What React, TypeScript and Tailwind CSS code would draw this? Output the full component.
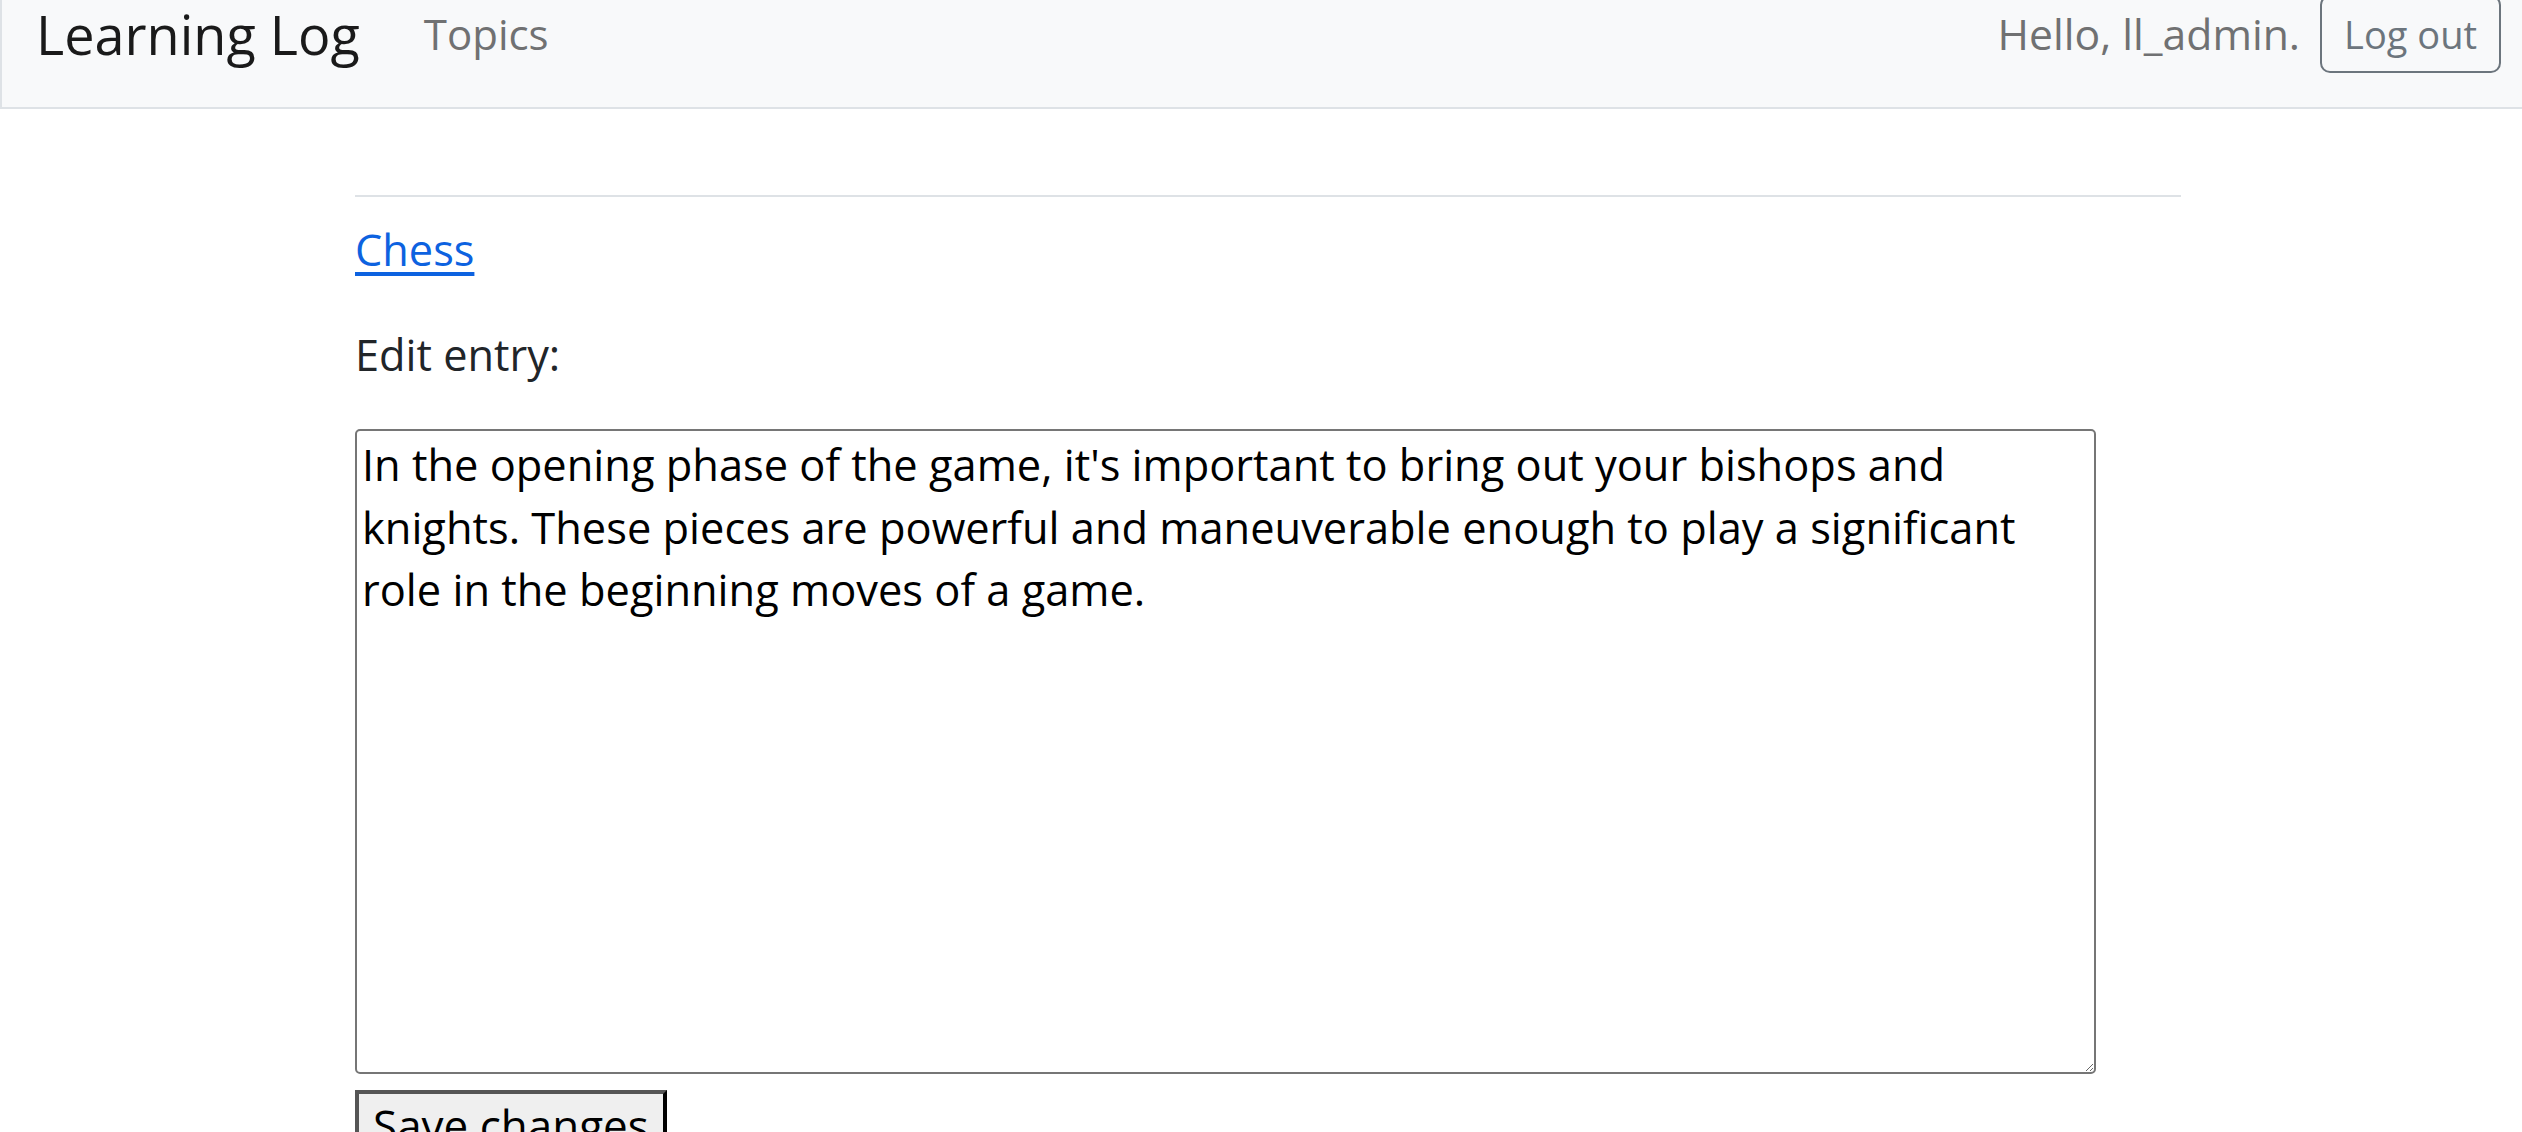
import React from 'react';

const entryText =
  "In the opening phase of the game, it's important to bring out your bishops and\nknights. These pieces are powerful and maneuverable enough to play a significant\nrole in the beginning moves of a game.";

export default function App() {
  return (
    <div className="min-h-screen bg-white font-['Open_Sans','Noto_Sans',sans-serif] text-[#212529] overflow-hidden">
      {/* Navbar (page is scrolled a little, so the top is cut) */}
      <nav className="-mt-[39px] h-[148px] bg-[#f8f9fa] border-b-2 border-l-2 border-[#dee2e6] flex items-center pl-[34px] pr-[21px]">
        <a href="#" className="text-[54px] leading-[1.2] text-[#1a1a1a]">Learning Log</a>
        <a href="#" className="ml-[64px] text-[42px] leading-[1.3] text-[#707172]">Topics</a>
        <div className="ml-auto flex items-center">
          <span className="text-[42.7px] leading-[1.3] text-[#707172]">Hello, ll_admin.</span>
          <button className="ml-[20px] h-[78px] px-[22px] border-2 border-[#6c757d] rounded-[10px] text-[38px] leading-none text-[#6c757d]">
            Log out
          </button>
        </div>
      </nav>

      <main className="ml-[355px] w-[1826px]">
        {/* page header */}
        <div className="mt-[65px] pb-[21px] border-b-2 border-[#dee2e6]" />

        <div className="mt-[21px] text-[43.3px] leading-[63px]">
          <p className="mb-[42px]">
            <a href="#" className="text-[#0d62e0] underline underline-offset-[6px]">Chess</a>
          </p>
          <p className="mb-[43px]">Edit entry:</p>

          <form className="flex flex-col items-start">
            <textarea
              defaultValue={entryText}
              className="w-[1741px] h-[645px] border-2 border-[#767676] rounded-[5px] px-[5px] pt-[3px] text-[43.4px] leading-[62.5px] text-black outline-none"
            />
            <button
              type="button"
              className="mt-[16px] bg-[#efefef] border-4 border-t-[#555] border-l-[#555] border-r-black border-b-black px-[14px] pt-[2px] pb-[6px] text-[44px] leading-[58px] text-black"
            >
              Save changes
            </button>
          </form>
        </div>
      </main>
    </div>
  );
}
